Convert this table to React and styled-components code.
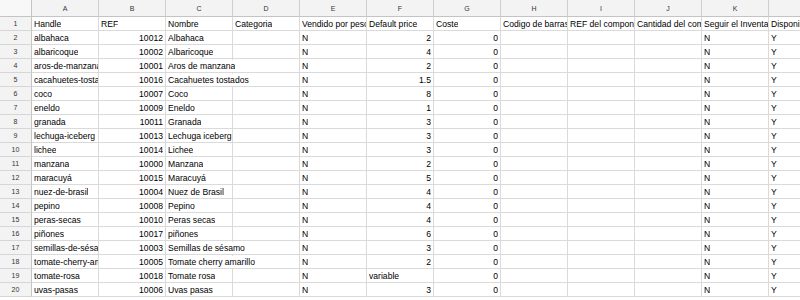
import React from "react";
import styled, { createGlobalStyle } from "styled-components";

const Global = createGlobalStyle`
  html, body { margin: 0; padding: 0; background: #fff; overflow: hidden; }
  body { font-family: "Liberation Sans", Arial, sans-serif; }
`;

const COL_W = 67;
const LETTERS = ["A", "B", "C", "D", "E", "F", "G", "H", "I", "J", "K", "L"];

const header = [
  "Handle", "REF", "Nombre", "Categoria", "Vendido por peso", "Default price",
  "Coste", "Codigo de barras", "REF del componente", "Cantidad del componente",
  "Seguir el Inventario", "Disponible para la venta",
];

const items = [
  ["albahaca", 10012, "Albahaca", 2],
  ["albaricoque", 10002, "Albaricoque", 4],
  ["aros-de-manzana", 10001, "Aros de manzana", 2],
  ["cacahuetes-tostados", 10016, "Cacahuetes tostados", 1.5],
  ["coco", 10007, "Coco", 8],
  ["eneldo", 10009, "Eneldo", 1],
  ["granada", 10011, "Granada", 3],
  ["lechuga-iceberg", 10013, "Lechuga iceberg", 3],
  ["lichee", 10014, "Lichee", 3],
  ["manzana", 10000, "Manzana", 2],
  ["maracuyá", 10015, "Maracuyá", 5],
  ["nuez-de-brasil", 10004, "Nuez de Brasil", 4],
  ["pepino", 10008, "Pepino", 4],
  ["peras-secas", 10010, "Peras secas", 4],
  ["piñones", 10017, "piñones", 6],
  ["semillas-de-sésamo", 10003, "Semillas de sésamo", 3],
  ["tomate-cherry-amarillo", 10005, "Tomate cherry amarillo", 2],
  ["tomate-rosa", 10018, "Tomate rosa", "variable"],
  ["uvas-pasas", 10006, "Uvas pasas", 3],
];

const rows = [
  header,
  ...items.map(([h, ref, name, price]) => [
    h, ref, name, "", "N", price, 0, "", "", "", "N", "Y",
  ]),
];

const Viewport = styled.div`
  width: 100vw;
  height: 100vh;
  overflow: hidden;
`;

const Sheet = styled.div`
  display: grid;
  grid-template-columns: 32px repeat(11, ${COL_W}px) 110px;
  grid-template-rows: 17px repeat(20, 14px);
  width: max-content;
`;

const Corner = styled.div`
  box-sizing: border-box;
  background: #f8f8f8;
  border-right: 1px solid #c4c4c4;
  border-bottom: 1px solid #c4c4c4;
`;

const ColHead = styled.div`
  box-sizing: border-box;
  background: #f3f3f3;
  border-right: 1px solid #cfcfcf;
  border-bottom: 1px solid #c4c4c4;
  color: #333;
  font-size: 7px;
  display: flex;
  align-items: center;
  justify-content: center;
  padding-top: 1px;
`;

const RowHead = styled.div`
  box-sizing: border-box;
  background: #f3f3f3;
  border-right: 1px solid #c4c4c4;
  border-bottom: 1px solid #d6d6d6;
  color: #333;
  font-size: 7px;
  display: flex;
  align-items: center;
  justify-content: center;
`;

const Cell = styled.div`
  box-sizing: border-box;
  background: #fff;
  border-right: 1px solid #dadada;
  border-bottom: 1px solid #dadada;
  position: relative;
  display: flex;
  align-items: center;
  justify-content: ${(p) => (p.$right ? "flex-end" : "flex-start")};
  padding: ${(p) => (p.$right ? "1px 2px 0 0" : "1px 0 0 2px")};
  overflow: visible;
  color: #000;
  font-size: 8.6px;
  line-height: 12px;
`;

const Text = styled.span`
  position: relative;
  z-index: 1;
  flex-shrink: 0;
  background: #fff;
  white-space: nowrap;
  overflow: hidden;
  max-width: ${(p) => p.$span * COL_W - 3}px;
`;

function spanFor(row, c) {
  let n = 1;
  for (let k = c + 1; k < row.length; k++) {
    if (row[k] !== "" && row[k] !== undefined) break;
    n++;
  }
  return n;
}

export default function App() {
  return (
    <>
      <Global />
      <Viewport>
        <Sheet>
          <Corner />
          {LETTERS.map((l) => (
            <ColHead key={l}>{l}</ColHead>
          ))}
          {rows.map((row, r) => (
            <React.Fragment key={r}>
              <RowHead>{r + 1}</RowHead>
              {row.map((v, c) => {
                const isNum = typeof v === "number";
                return (
                  <Cell key={c} $right={isNum}>
                    {v !== "" && (
                      <Text $span={isNum ? 1 : spanFor(row, c)}>{v}</Text>
                    )}
                  </Cell>
                );
              })}
            </React.Fragment>
          ))}
        </Sheet>
      </Viewport>
    </>
  );
}
